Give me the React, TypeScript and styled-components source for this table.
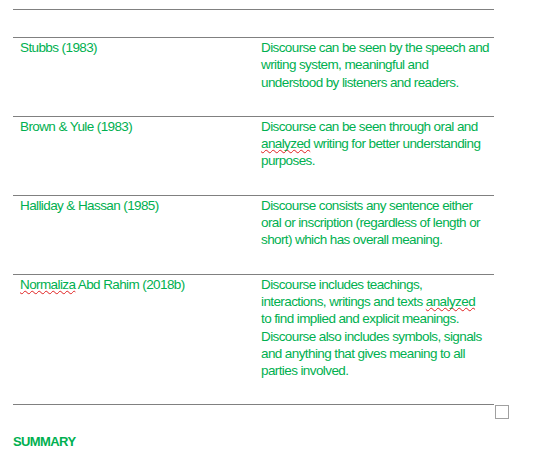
import React from "react";
import styled, { createGlobalStyle } from "styled-components";

const Global = createGlobalStyle`
  html, body { margin: 0; padding: 0; background: #ffffff; }
  body { font-family: "Liberation Sans", Arial, sans-serif; }
`;

const Sheet = styled.div`
  padding: 9px 0 0 13px;
  width: 533px;
  height: 465px;
  box-sizing: border-box;
  overflow: hidden;
`;

const Table = styled.div`
  position: relative;
  width: 481px;
  border-bottom: 1px solid #808080;
`;

const Row = styled.div<{ $empty?: boolean }>`
  display: grid;
  grid-template-columns: 241px 240px;
  border-top: 1px solid #808080;
  box-sizing: border-box;
  padding: ${(p) => (p.$empty ? "0" : "1px 0 25px")};
  height: ${(p) => (p.$empty ? "28px" : "auto")};
`;

const Cell = styled.div`
  padding-left: 7px;
  font-family: "Liberation Sans", Arial, sans-serif;
  font-size: 13.5px;
  line-height: 17.3px;
  letter-spacing: -0.6px;
  color: #00b050;
  white-space: nowrap;
`;

const Misspelled = styled.span`
  text-decoration: underline wavy #e02020;
  text-decoration-thickness: 1px;
  text-underline-offset: 1px;
  text-decoration-skip-ink: none;
`;

const ResizeHandle = styled.div`
  position: absolute;
  left: calc(100% + 1px);
  top: calc(100% + 1px);
  width: 14px;
  height: 14px;
  box-sizing: border-box;
  border: 1px solid #a0a0a0;
  background: #ffffff;
`;

const Heading = styled.div`
  margin-top: 28px;
  font-family: "Liberation Sans", Arial, sans-serif;
  font-size: 13px;
  line-height: 17.3px;
  font-weight: bold;
  letter-spacing: -0.6px;
  color: #00b050;
`;

type Entry = { author: React.ReactNode; lines: React.ReactNode[] };

const entries: Entry[] = [
  {
    author: "Stubbs (1983)",
    lines: [
      "Discourse can be seen by the speech and",
      "writing system, meaningful and",
      "understood by listeners and readers.",
    ],
  },
  {
    author: "Brown & Yule (1983)",
    lines: [
      "Discourse can be seen through oral and",
      <>
        <Misspelled>analyzed</Misspelled> writing for better understanding
      </>,
      "purposes.",
    ],
  },
  {
    author: "Halliday & Hassan (1985)",
    lines: [
      "Discourse consists any sentence either",
      "oral or inscription (regardless of length or",
      "short) which has overall meaning.",
    ],
  },
  {
    author: (
      <>
        <Misspelled>Normaliza</Misspelled> Abd Rahim (2018b)
      </>
    ),
    lines: [
      "Discourse includes teachings,",
      <>
        interactions, writings and texts <Misspelled>analyzed</Misspelled>
      </>,
      "to find implied and explicit meanings.",
      "Discourse also includes symbols, signals",
      "and anything that gives meaning to all",
      "parties involved.",
    ],
  },
];

export default function App() {
  return (
    <>
      <Global />
      <Sheet>
        <Table>
          <Row $empty>
            <Cell />
            <Cell />
          </Row>
          {entries.map((e, i) => (
            <Row key={i}>
              <Cell>{e.author}</Cell>
              <Cell>
                {e.lines.map((l, j) => (
                  <React.Fragment key={j}>
                    {l}
                    {j < e.lines.length - 1 && <br />}
                  </React.Fragment>
                ))}
              </Cell>
            </Row>
          ))}
          <ResizeHandle />
        </Table>
        <Heading>SUMMARY</Heading>
      </Sheet>
    </>
  );
}
